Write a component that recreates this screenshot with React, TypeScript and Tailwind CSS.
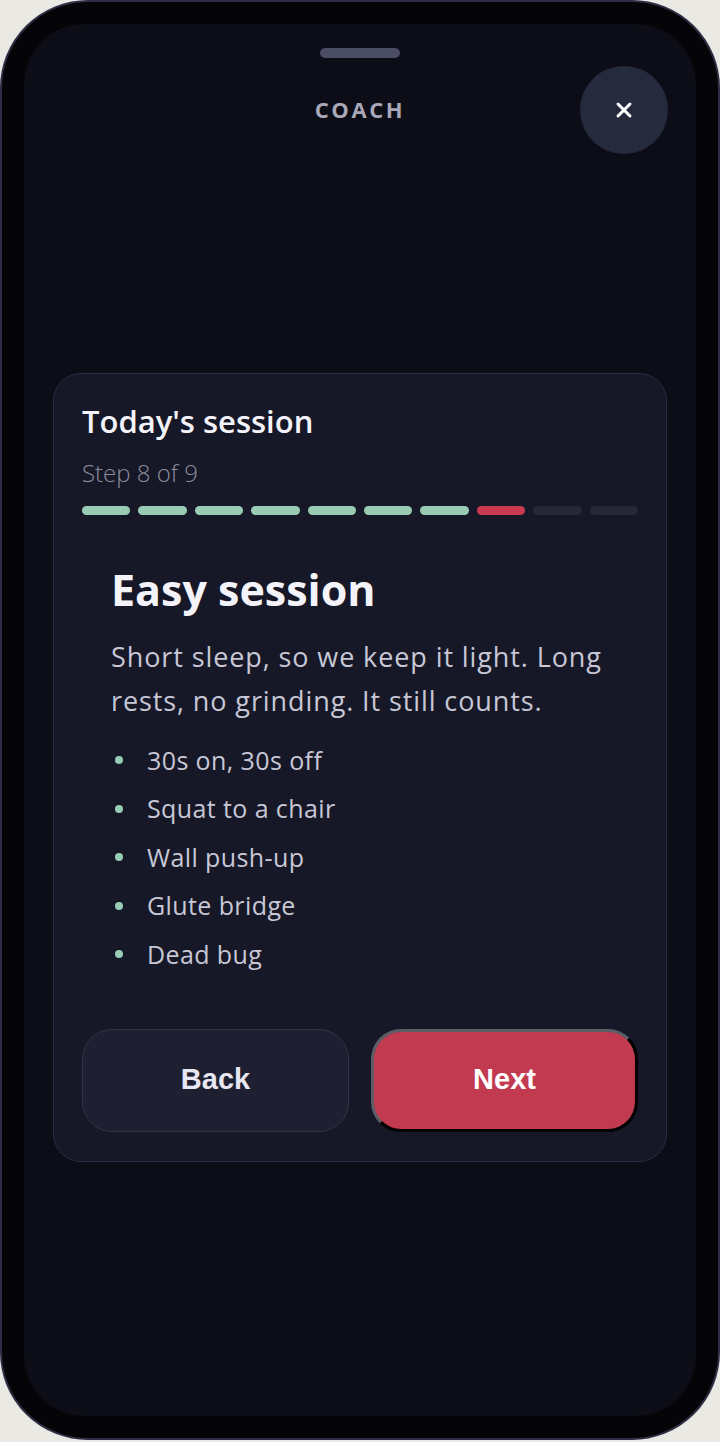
import { X } from 'lucide-react'

const steps = ['done', 'done', 'done', 'done', 'done', 'done', 'done', 'current', 'todo', 'todo']

const items = ['30s on, 30s off', 'Squat to a chair', 'Wall push-up', 'Glute bridge', 'Dead bug']

export default function App() {
  return (
    <div className="w-[720px] h-[1442px] bg-[#ebe9e3] font-['Open_Sans',sans-serif]">
      <div className="h-[1440px] rounded-[88px] border-2 border-[#2e2e44] bg-[#050508] p-[22px]">
        <div className="h-full rounded-[60px] bg-[#0c0d16] flex flex-col">
          {/* handle */}
          <div className="mt-6 mx-auto w-20 h-[10px] rounded-full bg-[#4a4d63]"></div>

          {/* header */}
          <div className="relative mt-2 h-[88px] flex items-center justify-center">
            <h1 className="text-[22px] leading-[28px] pb-[2px] font-bold tracking-[2.6px] text-[#a9a8b8]">COACH</h1>
            <button className="absolute right-[28px] top-0 w-[88px] h-[88px] rounded-full bg-[#262a3d] flex items-center justify-center text-white">
              <X size={24} strokeWidth={3} />
            </button>
          </div>

          {/* card */}
          <div className="mt-[219px] mx-[29px] rounded-[28px] border border-[#2a2c3f] bg-[#161827] px-[28px] pt-[29px] pb-[29px]">
            <h2 className="text-[31px] leading-[36px] font-semibold text-[#f4f3fa]">Today's session</h2>
            <p className="mt-[20px] text-[24px] leading-[28px] font-light text-[#8c8c9e]">Step 8 of 9</p>
            <div className="mt-[19px] flex gap-2">
              {steps.map((s, i) => (
                <div
                  key={i}
                  className={`flex-1 h-[9px] rounded-full ${
                    s === 'done' ? 'bg-[#99ccb4]' : s === 'current' ? 'bg-[#c93a4f]' : 'bg-[#252838]'
                  }`}
                ></div>
              ))}
            </div>

            <div className="px-[29px]">
              <h3 className="mt-[51px] text-[43px] leading-[48px] font-bold text-[#f4f3fa]">Easy session</h3>
              <p className="mt-[21px] text-[27px] leading-[44px] tracking-[0.9px] text-[#c7c7d6]">
                Short sleep, so we keep it light. Long rests, no grinding. It still counts.
              </p>
              <ul className="mt-[13px]">
                {items.map((it) => (
                  <li key={it} className="flex items-center h-[48.5px] text-[25px] tracking-[0.4px] text-[#c7c7d6]">
                    <span className="ml-1 w-2 h-2 rounded-full bg-[#99ccb4] shrink-0"></span>
                    <span className="ml-6">{it}</span>
                  </li>
                ))}
              </ul>
            </div>

            <div className="mt-[50px] grid grid-cols-2 gap-[22px] font-['Liberation_Sans',Arial,sans-serif]">
              <button className="h-[103px] rounded-[30px] border border-[#30334a] bg-[#1e2031] text-[29px] font-bold text-[#e8e6f2]">
                Back
              </button>
              <button className="h-[103px] rounded-[30px] border-[3px] border-t-[#5c5c66] border-l-[#5c5c66] border-r-black border-b-black bg-[#c23a50] text-[29px] font-bold text-white">
                Next
              </button>
            </div>
          </div>
        </div>
      </div>
    </div>
  )
}
